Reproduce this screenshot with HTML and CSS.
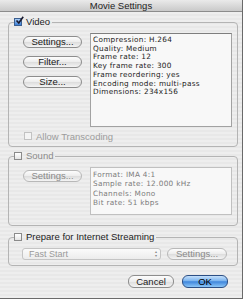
FILE: index.html
```html
<!DOCTYPE html>
<html lang="en">
<head>
  <meta charset="UTF-8">
  <title>Movie Settings</title>
  <link rel="stylesheet" href="styles.css">
</head>
<body>
  <div class="window">
    <div class="titlebar">Movie Settings</div>

    <fieldset class="group video">
      <legend><span class="check on"><svg viewBox="0 0 9 9" width="9" height="9"><path d="M1.5 4.5 L3.8 7 L8.2 0.8" fill="none" stroke="#1a1a2e" stroke-width="1.6"/></svg></span>Video</legend>
      <div class="row">
        <div class="btn-col">
          <button class="btn">Settings...</button>
          <button class="btn">Filter...</button>
          <button class="btn">Size...</button>
        </div>
        <div class="info video-info">
          Compression: H.264<br>
          Quality: Medium<br>
          Frame rate: 12<br>
          Key frame rate: 300<br>
          Frame reordering: yes<br>
          Encoding mode: multi-pass<br>
          Dimensions: 234x156
        </div>
      </div>
      <div class="allow"><span class="check dim"></span>Allow Transcoding</div>
    </fieldset>

    <fieldset class="group sound">
      <legend class="dim-legend"><span class="check"></span>Sound</legend>
      <div class="row">
        <div class="btn-col">
          <button class="btn off">Settings...</button>
        </div>
        <div class="info sound-info">
          Format: IMA 4:1<br>
          Sample rate: 12.000 kHz<br>
          Channels: Mono<br>
          Bit rate: 51 kbps
        </div>
      </div>
    </fieldset>

    <fieldset class="group stream">
      <legend><span class="check"></span>Prepare for Internet Streaming</legend>
      <div class="stream-row">
        <div class="popup">Fast Start<span class="arrows">&#9652;<br>&#9662;</span></div>
        <button class="btn off small">Settings...</button>
      </div>
    </fieldset>

    <div class="actions">
      <button class="btn act">Cancel</button>
      <button class="btn act ok">OK</button>
    </div>
  </div>
</body>
</html>
```

FILE: styles.css
```css
body{
  margin: 0;
  font-family: "Liberation Sans", Arial, sans-serif;
  font-size: 8px;
  color: #1c1c1c;
}
.window{
  width: 243px;
  height: 299px;
  box-sizing: border-box;
  border-right: 1px solid #6a6a6a;
  border-bottom: 1px solid #6a6a6a;
  background: repeating-linear-gradient(to bottom, #eeeeee 0, #eeeeee 2px, #e8e8e8 2px, #e8e8e8 4px);
  overflow: hidden;
}
.titlebar{
  height: 12px;
  line-height: 12px;
  text-align: center;
  font-size: 9.5px;
  color: #222;
  background: linear-gradient(to bottom, #eaeaea, #c9c9c9);
  border-bottom: 1px solid #8c8c8c;
  box-sizing: border-box;
}
.group{
  margin: 0 0 0 8px;
  width: 230px;
  box-sizing: border-box;
  padding: 0 5px 0 14px;
  border: 1px solid #b4b4b4;
  border-radius: 4px;
}
.group legend{
  margin-left: -9px;
  padding: 0 2px 0 0;
  height: 10px;
  line-height: 10px;
  font-size: 9.5px;
  display: flex;
  align-items: center;
}
.video{ margin-top: 5px; padding-bottom: 5px; }
.sound{ margin-top: 4px; padding-bottom: 10px; }
.stream{ margin-top: 6px; padding-bottom: 5px; }
.check{
  display: inline-block;
  width: 8px;
  height: 8px;
  margin-right: 4px;
  border: 1px solid #8a8a8a;
  box-sizing: border-box;
  background: linear-gradient(to bottom, #fff, #e4e4e4);
  position: relative;
}
.check.on{
  background: linear-gradient(to bottom, #a9cdf5, #3a7fd8);
  border-color: #3c5f90;
}
.check.on svg{
  position: absolute;
  left: 0;
  top: -3px;
}
.check.dim{
  border-color: #c2c2c2;
  background: #f4f4f4;
}
.row{
  display: flex;
  gap: 8px;
  padding-top: 6px;
}
.btn-col{
  display: flex;
  flex-direction: column;
  gap: 8px;
  margin-top: 3px;
}
.btn{
  width: 59px;
  height: 12px;
  padding: 0;
  border: 1px solid #8d8d8d;
  border-radius: 6px;
  background: linear-gradient(to bottom, #fdfdfd 0, #ececec 50%, #dcdcdc 51%, #f4f4f4 100%);
  font-family: "Liberation Sans", Arial, sans-serif;
  font-size: 9.5px;
  line-height: 10px;
  color: #1a1a1a;
}
.btn.off{
  color: #8a8a8a;
  border-color: #b8b8b8;
}
.info{
  width: 142px;
  box-sizing: border-box;
  padding: 2px 2px;
  background: #f8f8f8;
  border: 1px solid #a2a2a2;
  border-top-color: #7e7e7e;
  font-family: "DejaVu Sans", sans-serif;
  font-size: 7.3px;
  letter-spacing: 0.3px;
  line-height: 8.7px;
}
.video-info{ height: 94px; }
.sound-info{
  height: 48px;
  color: #7c7c7c;
  border-color: #c0c0c0;
  line-height: 9.3px;
}
.allow{
  display: flex;
  align-items: center;
  margin-top: 4px;
  padding-left: 1px;
  height: 10px;
  font-size: 9.5px;
  color: #9c9c9c;
}
.dim-legend{ color: #8a8a8a; }
.stream-row{
  display: flex;
  gap: 6px;
  padding-top: 6px;
  margin-left: -1px;
}
.popup{
  width: 139px;
  height: 12px;
  box-sizing: border-box;
  padding: 0 3px 0 6px;
  display: flex;
  justify-content: space-between;
  align-items: center;
  border: 1px solid #c4c4c4;
  border-radius: 3px;
  background: linear-gradient(to bottom, #fbfbfb, #ececec);
  font-size: 9px;
  color: #9a9a9a;
}
.arrows{
  font-size: 4px;
  line-height: 4px;
  color: #888;
  text-align: center;
}
.btn.small{ width: 60px; }
.actions{
  display: flex;
  justify-content: flex-end;
  gap: 8px;
  margin: 9px 14px 0 0;
}
.btn.act{
  width: 46px;
  height: 13px;
  font-size: 9.5px;
}
.btn.ok{
  border-color: #2c4f85;
  background: linear-gradient(to bottom, #c5e0fb 0, #7ab3ee 45%, #3f86dc 52%, #8cc6f7 100%);
  color: #000;
}
```
